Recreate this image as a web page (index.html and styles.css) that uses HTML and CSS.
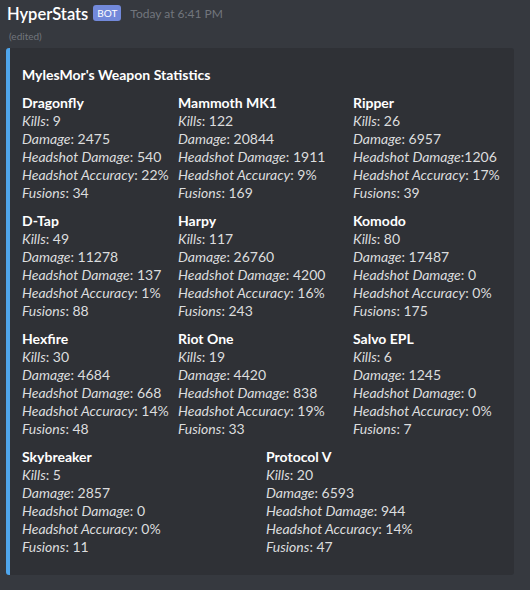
FILE: index.html
```html
<!DOCTYPE html>
<html>
<head>
<meta charset="utf-8">
<link rel="stylesheet" href="styles.css">
</head>
<body>
<div class="msg">
  <div class="header">
    <span class="username">HyperStats</span>
    <span class="bot">BOT</span>
    <span class="time">Today at 6:41 PM</span>
  </div>
  <div class="edited">(edited)</div>
  <div class="embed">
    <div class="title">MylesMor's Weapon Statistics</div>
    <div class="row three">
      <div class="field">
        <div class="name">Dragonfly</div>
        <div class="val"><i>Kills</i>: 9</div>
        <div class="val"><i>Damage</i>: 2475</div>
        <div class="val"><i>Headshot Damage</i>: 540</div>
        <div class="val"><i>Headshot Accuracy</i>: 22%</div>
        <div class="val"><i>Fusions</i>: 34</div>
      </div>
      <div class="field">
        <div class="name">Mammoth MK1</div>
        <div class="val"><i>Kills</i>: 122</div>
        <div class="val"><i>Damage</i>: 20844</div>
        <div class="val"><i>Headshot Damage</i>: 1911</div>
        <div class="val"><i>Headshot Accuracy</i>: 9%</div>
        <div class="val"><i>Fusions</i>: 169</div>
      </div>
      <div class="field">
        <div class="name">Ripper</div>
        <div class="val"><i>Kills</i>: 26</div>
        <div class="val"><i>Damage</i>: 6957</div>
        <div class="val"><i>Headshot Damage</i>:1206</div>
        <div class="val"><i>Headshot Accuracy</i>: 17%</div>
        <div class="val"><i>Fusions</i>: 39</div>
      </div>
    </div>
    <div class="row three">
      <div class="field">
        <div class="name">D-Tap</div>
        <div class="val"><i>Kills</i>: 49</div>
        <div class="val"><i>Damage</i>: 11278</div>
        <div class="val"><i>Headshot Damage</i>: 137</div>
        <div class="val"><i>Headshot Accuracy</i>: 1%</div>
        <div class="val"><i>Fusions</i>: 88</div>
      </div>
      <div class="field">
        <div class="name">Harpy</div>
        <div class="val"><i>Kills</i>: 117</div>
        <div class="val"><i>Damage</i>: 26760</div>
        <div class="val"><i>Headshot Damage</i>: 4200</div>
        <div class="val"><i>Headshot Accuracy</i>: 16%</div>
        <div class="val"><i>Fusions</i>: 243</div>
      </div>
      <div class="field">
        <div class="name">Komodo</div>
        <div class="val"><i>Kills</i>: 80</div>
        <div class="val"><i>Damage</i>: 17487</div>
        <div class="val"><i>Headshot Damage</i>: 0</div>
        <div class="val"><i>Headshot Accuracy</i>: 0%</div>
        <div class="val"><i>Fusions</i>: 175</div>
      </div>
    </div>
    <div class="row three">
      <div class="field">
        <div class="name">Hexfire</div>
        <div class="val"><i>Kills</i>: 30</div>
        <div class="val"><i>Damage</i>: 4684</div>
        <div class="val"><i>Headshot Damage</i>: 668</div>
        <div class="val"><i>Headshot Accuracy</i>: 14%</div>
        <div class="val"><i>Fusions</i>: 48</div>
      </div>
      <div class="field">
        <div class="name">Riot One</div>
        <div class="val"><i>Kills</i>: 19</div>
        <div class="val"><i>Damage</i>: 4420</div>
        <div class="val"><i>Headshot Damage</i>: 838</div>
        <div class="val"><i>Headshot Accuracy</i>: 19%</div>
        <div class="val"><i>Fusions</i>: 33</div>
      </div>
      <div class="field">
        <div class="name">Salvo EPL</div>
        <div class="val"><i>Kills</i>: 6</div>
        <div class="val"><i>Damage</i>: 1245</div>
        <div class="val"><i>Headshot Damage</i>: 0</div>
        <div class="val"><i>Headshot Accuracy</i>: 0%</div>
        <div class="val"><i>Fusions</i>: 7</div>
      </div>
    </div>
    <div class="row two">
      <div class="field">
        <div class="name">Skybreaker</div>
        <div class="val"><i>Kills</i>: 5</div>
        <div class="val"><i>Damage</i>: 2857</div>
        <div class="val"><i>Headshot Damage</i>: 0</div>
        <div class="val"><i>Headshot Accuracy</i>: 0%</div>
        <div class="val"><i>Fusions</i>: 11</div>
      </div>
      <div class="field">
        <div class="name">Protocol V</div>
        <div class="val"><i>Kills</i>: 20</div>
        <div class="val"><i>Damage</i>: 6593</div>
        <div class="val"><i>Headshot Damage</i>: 944</div>
        <div class="val"><i>Headshot Accuracy</i>: 14%</div>
        <div class="val"><i>Fusions</i>: 47</div>
      </div>
    </div>
  </div>
</div>
</body>
</html>
```
FILE: styles.css
```css
html, body {
  margin: 0;
  padding: 0;
  background: #36393f;
}
body {
  font-family: Lato, "Open Sans", sans-serif;
  color: #dcddde;
}
.msg {
  padding-left: 6px;
}
.header {
  height: 27px;
  display: flex;
  align-items: center;
  padding-left: 1px;
}
.username {
  font-size: 16.5px;
  font-weight: 600;
  color: #ffffff;
}
.bot {
  margin-left: 5px;
  background: #7289da;
  color: #ffffff;
  font-size: 10px;
  line-height: 16px;
  height: 16px;
  padding: 0 4px;
  border-radius: 3px;
  position: relative;
  top: -1px;
}
.time {
  margin-left: 9px;
  font-size: 12px;
  color: #72767d;
}
.edited {
  height: 19px;
  line-height: 19px;
  font-size: 10px;
  color: #72767d;
  padding-left: 3px;
}
.embed {
  margin-top: 2px;
  width: 508px;
  box-sizing: border-box;
  background: #2f3136;
  border-left: 4px solid #4fa6ed;
  border-radius: 3px;
  padding: 18px 10px 19px 12px;
}
.title {
  font-size: 14px;
  font-weight: 700;
  line-height: 18px;
  color: #ffffff;
  margin-bottom: 10px;
}
.row {
  display: grid;
  margin-bottom: 10px;
}
.row:last-child {
  margin-bottom: 0;
}
.row.three {
  grid-template-columns: 156px 175px 1fr;
}
.row.two {
  grid-template-columns: 244px 1fr;
}
.name {
  font-size: 14px;
  font-weight: 700;
  line-height: 18px;
  color: #ffffff;
}
.val {
  font-size: 14px;
  line-height: 18px;
  color: #dcddde;
  white-space: nowrap;
}
.val i {
  font-style: italic;
}
```
